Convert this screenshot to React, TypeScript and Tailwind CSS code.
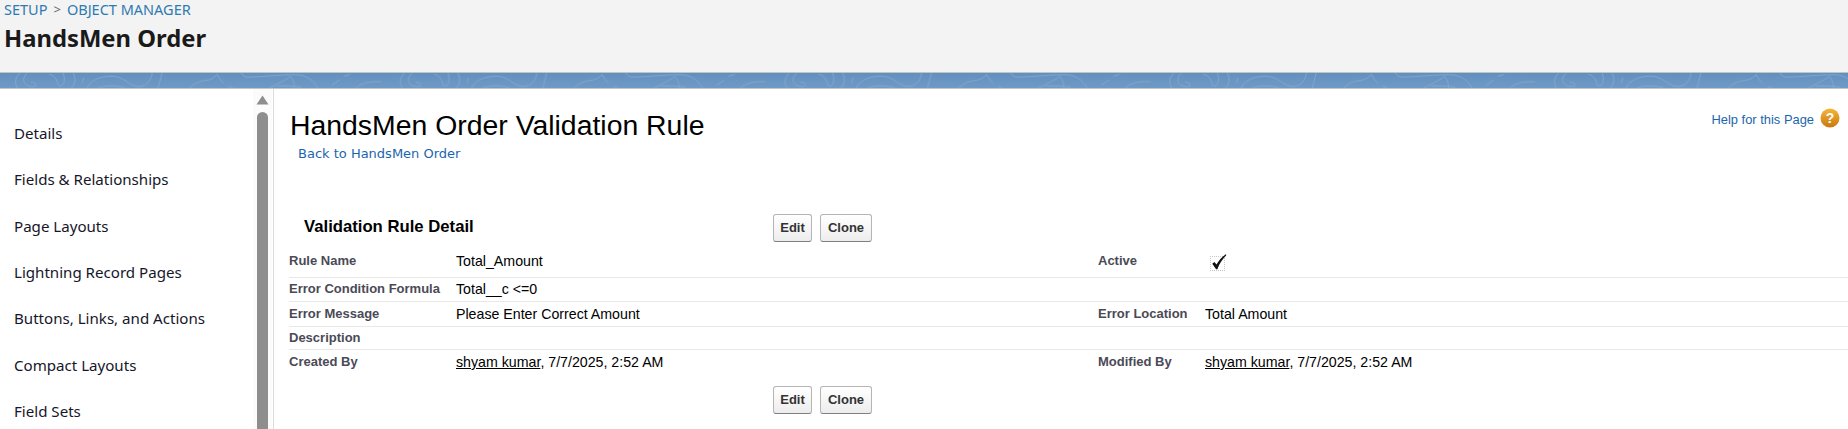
const sideItems = [
  "Details",
  "Fields & Relationships",
  "Page Layouts",
  "Lightning Record Pages",
  "Buttons, Links, and Actions",
  "Compact Layouts",
  "Field Sets",
];

// one repeat of the contour-line texture in the blue band
function Band() {
  return (
    <div className="h-[17px] bg-gradient-to-b from-[#6290be] to-[#6f9ac7] border-y border-[#c4c4c0] overflow-hidden">
      <svg width="1848" height="15" fill="none">
        <defs>
          <pattern id="contour" width="974" height="46" patternUnits="userSpaceOnUse" patternTransform="scale(0.395 0.34)">
            <g stroke="#86a9cf" strokeWidth="2.2" fill="none">
              <path d="M50 0C38 14 36 30 45 46" />
              <path d="M70 0C54 12 56 40 84 40C96 40 92 24 78 28" />
              <path d="M125 4C135 6 142 12 148 36C158 44 168 26 160 0" />
              <path d="M185 0C192 16 192 30 180 46" />
              <path d="M212 14L208 30" />
              <path d="M220 46C226 22 256 6 292 10C318 16 330 40 352 40C372 38 384 20 385 0" />
              <path d="M245 46C262 36 296 34 320 46" />
              <path d="M410 0L400 46" />
              <path d="M480 46C488 30 505 24 530 20C540 16 546 10 550 4C554 14 560 24 566 30M580 40L592 46" />
              <path d="M610 0C616 8 622 14 630 12C660 12 730 2 760 6C784 12 798 28 805 46" />
              <path d="M680 46C700 32 722 22 735 10C744 22 746 34 745 46M700 38C720 38 745 38 762 42" />
              <path d="M840 36L860 20M870 10L886 4" />
              <path d="M900 46C910 30 935 24 965 26" />
            </g>
          </pattern>
        </defs>
        <rect width="1848" height="15" fill="url(#contour)" />
      </svg>
    </div>
  );
}

function PageButtons() {
  return (
    <div className="flex gap-[8px]">
      <button className="h-[28px] w-[39px] rounded-[3px] border border-[#b5b5b5] border-b-[#7f7f7f] bg-gradient-to-b from-white to-[#ededed] text-[13px] font-bold text-[#333]">
        Edit
      </button>
      <button className="h-[28px] w-[52px] rounded-[3px] border border-[#b5b5b5] border-b-[#7f7f7f] bg-gradient-to-b from-white to-[#ededed] text-[13px] font-bold text-[#333]">
        Clone
      </button>
    </div>
  );
}

function Label({ children }: { children?: React.ReactNode }) {
  return <div className="text-[13px] font-bold text-[#4a4a56] leading-[16px] pt-[1px]">{children}</div>;
}

function Value({ children }: { children?: React.ReactNode }) {
  return <div className="text-[14.2px] text-black leading-[16px] pt-[1px]">{children}</div>;
}

const UserLine = () => (
  <>
    <span className="underline">shyam kumar</span>, 7/7/2025, 2:52 AM
  </>
);

const rows: { h: string; a: string; b: React.ReactNode; c?: string; d?: React.ReactNode }[] = [
  { h: "h-[27px] pt-[1px]", a: "Rule Name", b: "Total_Amount", c: "Active", d: "check" },
  { h: "h-[24px] pt-[2px]", a: "Error Condition Formula", b: "Total__c <=0" },
  { h: "h-[25px] pt-[3px]", a: "Error Message", b: "Please Enter Correct Amount", c: "Error Location", d: "Total Amount" },
  { h: "h-[23px] pt-[2px]", a: "Description", b: "" },
  { h: "h-[24px] pt-[3px]", a: "Created By", b: <UserLine />, c: "Modified By", d: <UserLine /> },
];

export default function App() {
  return (
    <div className="w-[1848px] h-[429px] overflow-hidden bg-white font-['Liberation_Sans',sans-serif]">
      <div className="h-[72px] bg-[#f3f3f3] pl-[4px] font-['Noto_Sans',sans-serif]">
        <div className="flex items-center gap-[6px] h-[20px] text-[14.5px] text-[#2f7ab0] uppercase">
          <span>Setup</span>
          <span className="text-[#666] text-[13px]">&gt;</span>
          <span>Object Manager</span>
        </div>
        <h1 className="mt-[4px] text-[23.8px] leading-[28px] font-bold text-[#1a1a1a]">HandsMen Order</h1>
      </div>
      <Band />
      <div className="flex h-[340px]">
        <aside className="flex w-[274px] shrink-0 border-r border-[#dcdcdc]">
          <nav className="flex-1 pt-[21px] pl-[14px] font-['Noto_Sans',sans-serif] text-[15.1px] text-[#16162a]">
            {sideItems.map((item) => (
              <div key={item} className="h-[46.4px] flex items-center">
                {item}
              </div>
            ))}
          </nav>
          <div className="w-[19px] mr-[1px] flex flex-col items-center pt-[6px] bg-[#fbfbfb]">
            <svg width="13" height="10" viewBox="0 0 13 10" fill="#8e8e8e">
              <path d="M6.5 0.5L12.5 9.5H0.5Z" />
            </svg>
            <div className="mt-[7px] w-[11px] flex-1 rounded-t-[6px] bg-[#8e8e8e]" />
          </div>
        </aside>
        <main className="flex-1 min-w-0">
          <div className="flex justify-between">
            <div className="pl-[16px] pt-[18px]">
              <div className="text-[28.4px] leading-[36px] text-black">HandsMen Order Validation Rule</div>
              <a className="block pl-[8px] pt-[3px] font-['DejaVu_Sans',sans-serif] text-[13px] leading-[16px] text-[#1a66ae]">
                Back to HandsMen Order
              </a>
            </div>
            <div className="flex items-center gap-[6px] h-[20px] mt-[19px] mr-[8px]">
              <a className="pt-[3px] text-[12.9px] text-[#1a66ae]">Help for this Page</a>
              <svg width="20" height="20" viewBox="0 0 20 20">
                <defs>
                  <linearGradient id="help" x1="0" y1="0" x2="0" y2="1">
                    <stop offset="0" stopColor="#f4b63c" />
                    <stop offset="1" stopColor="#c9780f" />
                  </linearGradient>
                </defs>
                <circle cx="10" cy="10" r="9.5" fill="url(#help)" />
                <text x="10" y="15" textAnchor="middle" fontSize="14" fontWeight="bold" fill="#fff" fontFamily="Liberation Sans">?</text>
              </svg>
            </div>
          </div>
          <div className="flex items-center mt-[52px] h-[28px]">
            <div className="w-[499px] pl-[30px] pb-[2px] text-[16.7px] font-bold text-black">Validation Rule Detail</div>
            <PageButtons />
          </div>
          <div className="mt-[9px] ml-[15px]">
            {rows.map((r, i) => (
              <div
                key={r.a}
                className={`grid grid-cols-[167px_642px_107px_1fr] ${r.h} ${i < rows.length - 1 ? "border-b border-[#e8e8e8]" : ""}`}
              >
                <Label>{r.a}</Label>
                <Value>{r.b}</Value>
                <Label>{r.c}</Label>
                {r.d === "check" ? (
                  <div className="relative ml-[5px] mt-[4px] w-[15px] h-[15px] border border-dotted border-[#c4c4c4]">
                    <svg className="absolute left-[0px] top-[-4px]" width="17" height="17" viewBox="0 0 20 20">
                      <path d="M1.5 12.5L4 10.5L6.5 13.5C9 9 12.5 5 17.5 1.5L18 2.5C13.5 7 10 12 7.5 19H6Z" fill="#111" />
                    </svg>
                  </div>
                ) : (
                  <Value>{r.d}</Value>
                )}
              </div>
            ))}
          </div>
          <div className="flex mt-[12px] pl-[499px]">
            <PageButtons />
          </div>
        </main>
      </div>
    </div>
  );
}
